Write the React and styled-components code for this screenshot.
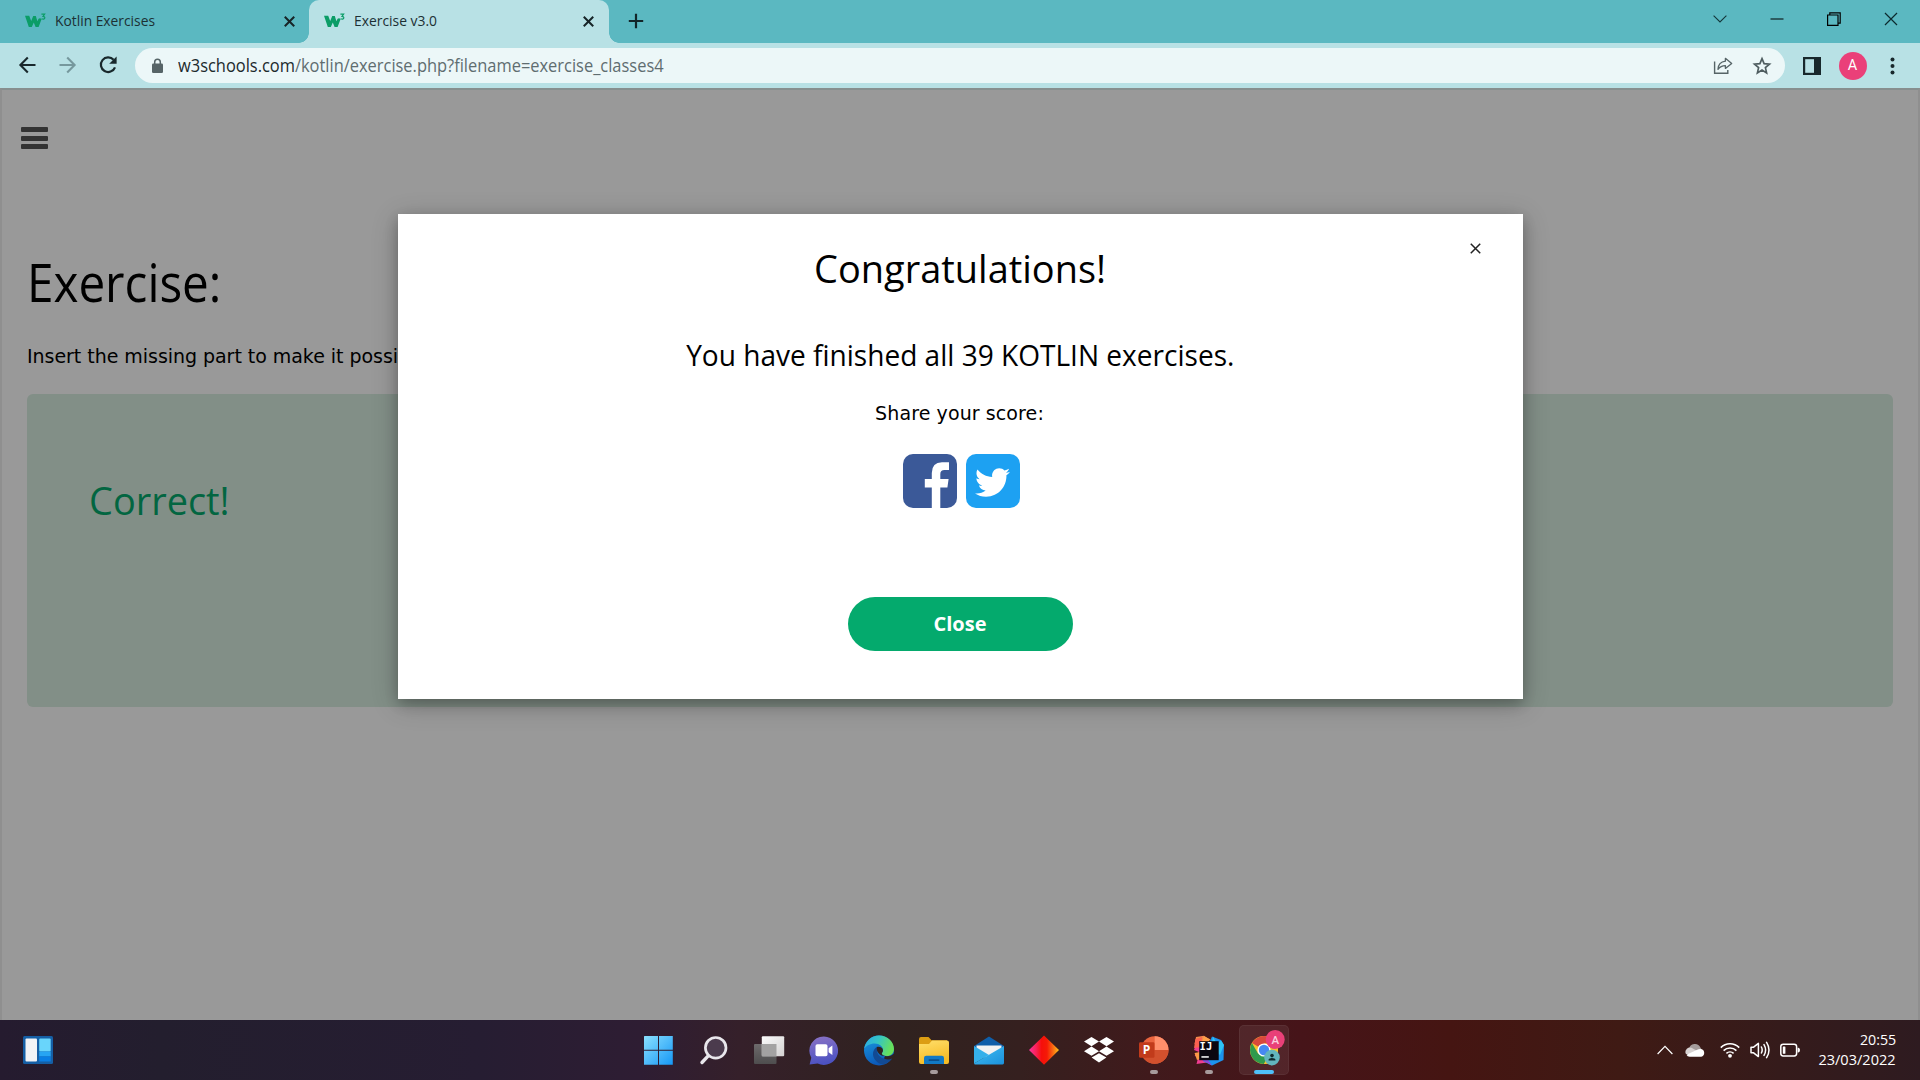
import React from "react";
import styled, { createGlobalStyle } from "styled-components";
import { FaTwitter } from "react-icons/fa";

const GlobalStyle = createGlobalStyle`
  * { box-sizing: border-box; }
  body { margin: 0; overflow: hidden; font-family: "Open Sans", "Noto Sans", sans-serif; }
  h1, h2, h3, p { margin: 0; font-weight: 400; }
  button { border: 0; background: none; padding: 0; font: inherit; }
  svg { display: block; flex: none; }
`;

const Screen = styled.div`
  width: 1920px;
  height: 1080px;
  display: flex;
  flex-direction: column;
  overflow: hidden;
`;

const Condensed = styled.span`
  display: inline-block;
  white-space: nowrap;
  transform: scaleX(${(p) => p.$x});
  transform-origin: ${(p) => p.$origin || "left"} center;
`;

/* ---------- browser chrome ---------- */

const TabStrip = styled.header`
  height: 43px;
  flex: none;
  display: flex;
  background: #5bb8c1;
`;

const Tab = styled.div`
  position: relative;
  display: flex;
  align-items: center;
  width: ${(p) => p.$width}px;
  padding: 0 ${(p) => p.$right}px 1px ${(p) => p.$left}px;
  border-radius: 10px 10px 0 0;
  background: ${(p) => (p.$active ? "#b8e1e5" : "transparent")};
  color: #1c3034;
  font-size: 15px;

  &::before, &::after {
    content: "";
    display: ${(p) => (p.$active ? "block" : "none")};
    position: absolute;
    bottom: 0;
    width: 10px;
    height: 10px;
  }
  &::before {
    left: -10px;
    background: radial-gradient(circle at 0 0, transparent 9.5px, #b8e1e5 10px);
  }
  &::after {
    right: -10px;
    background: radial-gradient(circle at 100% 0, transparent 9.5px, #b8e1e5 10px);
  }
`;

const TabTitle = styled.span`
  flex: 1;
  margin-left: 9px;
  line-height: 20px;
  padding-bottom: 3px;
`;

const NewTab = styled.button`
  display: flex;
  align-items: center;
  margin-left: 19px;
  padding-bottom: 1px;
`;

const WindowControls = styled.div`
  display: flex;
  align-items: center;
  gap: 43px;
  margin-left: auto;
  padding: 0 22px 6px 0;
`;

const Toolbar = styled.nav`
  height: 45px;
  flex: none;
  display: flex;
  align-items: center;
  background: #b8e1e5;
  padding: 0 18px 0 17px;
`;

const NavButtons = styled.div`
  display: flex;
  align-items: center;
  gap: 20.5px;
  width: 118px;
  padding-bottom: 1px;
`;

const AddressBar = styled.div`
  flex: 1;
  height: 35px;
  display: flex;
  align-items: center;
  padding: 0 13px 0 16px;
  border-radius: 18px;
  background: #ecf7f8;
  color: #5f6d70;
  font-size: 17.5px;
`;

const Url = styled.span`
  flex: 1;
  margin-left: 14px;
  line-height: 35px;
  b { font-weight: 400; color: #1c2a2d; }
`;

const AddressActions = styled.div`
  display: flex;
  align-items: center;
  gap: 19px;
`;

const ToolbarActions = styled.div`
  flex: none;
  display: flex;
  align-items: center;
  gap: 17.5px;
  margin-left: 18px;
  width: 99px;
`;

const Avatar = styled.span`
  flex: none;
  width: 28px;
  height: 28px;
  border-radius: 50%;
  background: #ea4079;
  color: #fff;
  font: 14.5px/28px Roboto, sans-serif;
  text-align: center;
`;

/* ---------- web page ---------- */

const Page = styled.main`
  position: relative;
  flex: 1;
  padding: 37px 25px 0;
  border: 2px solid #efefef;
  border-top-color: #e2efef;
  border-bottom: 0;
  background: #fff;
`;

const MenuButton = styled.button`
  display: flex;
  flex-direction: column;
  justify-content: space-between;
  height: 22px;
  margin-left: -6px;
`;

const MenuBar = styled.span`
  width: 27px;
  height: 5px;
  border-radius: 1px;
  background: #555;
`;

const ExerciseTitle = styled.h1`
  margin-top: 103px;
  font-size: 52.5px;
  line-height: 60px;
  color: #000;
`;

const Instruction = styled.p`
  margin-top: 30px;
  font: 19px/28px "DejaVu Sans", sans-serif;
  letter-spacing: -0.04px;
`;

const ResultPanel = styled.section`
  height: 313px;
  margin-top: 24px;
  padding: 81px 62px;
  border-radius: 6px;
  background: #d9eee1;
  color: #04aa6d;
`;

const ResultText = styled.h2`
  font-size: 39px;
  line-height: 50px;
`;

const Overlay = styled.div`
  position: absolute;
  inset: -2px -2px 0;
  display: flex;
  justify-content: center;
  align-items: flex-start;
  padding-top: 126px;
  padding-left: 1px;
  background: rgba(0, 0, 0, 0.4);
`;

const Modal = styled.div`
  position: relative;
  width: 1125px;
  height: 485px;
  display: flex;
  flex-direction: column;
  align-items: center;
  padding-top: 29px;
  background: #fff;
  color: #000;
  box-shadow: 0 5px 12px rgba(0, 0, 0, 0.2), 0 5px 25px rgba(0, 0, 0, 0.24);
`;

const DismissButton = styled.button`
  position: absolute;
  top: 29px;
  right: 42px;
`;

const ModalTitle = styled.h2`
  font-size: 39px;
  line-height: 50px;
`;

const ModalMessage = styled.h3`
  margin-top: 42px;
  font-size: 29.5px;
  line-height: 40px;
`;

const ShareLabel = styled.p`
  margin: 24px 2px 0 0;
  font: 19px/28px "DejaVu Sans", sans-serif;
  letter-spacing: 0.1px;
`;

const ShareLinks = styled.div`
  display: flex;
  gap: 8.5px;
  margin: 27.4px 0 0 2px;
`;

const TwitterTile = styled.span`
  width: 54px;
  height: 54px;
  display: flex;
  align-items: center;
  justify-content: center;
  padding-top: 2px;
  border-radius: 10px;
  background: #1da1f2;
  color: #fff;
`;

const CloseButton = styled.button`
  width: 225px;
  height: 54px;
  margin-top: 88.6px;
  padding: 0 1px 1px 0;
  border-radius: 27px;
  background: #04aa6d;
  color: #fff;
  font-size: 20px;
  font-weight: 700;
`;

/* ---------- taskbar ---------- */

const Taskbar = styled.footer`
  height: 60px;
  flex: none;
  display: grid;
  grid-template-columns: 631px 1fr auto;
  align-items: center;
  color: #fff;
  background: linear-gradient(90deg, #251b2f 0, #231e2e 160px, #261d32 480px, #2e1d33 640px, #35202a 740px,
    #30221f 900px, #35201f 1020px, #401a1c 1150px, #461419 1300px, #451512 1450px, #3f1a14 1620px, #351b1b 1780px, #2e1b20 1920px);
`;

const Widgets = styled.div`
  padding: 0 0 0 23px;
`;

const Apps = styled.div`
  display: flex;
  height: 60px;
`;

const AppSlot = styled.div`
  width: 55px;
  height: 60px;
  display: flex;
  flex-direction: column;
  align-items: center;
  padding-top: 15px;
`;

const AppTile = styled.div`
  display: flex;
  flex-direction: column;
  align-items: center;
  width: 50px;
  height: 50px;
  margin-top: -10px;
  padding-top: 9px;
  border: 1px solid ${(p) => (p.$active ? "rgba(255,255,255,.05)" : "transparent")};
  border-radius: 5px;
  background: ${(p) => (p.$active ? "rgba(255,255,255,.07)" : "transparent")};
`;

const RunningMark = styled.span`
  width: ${(p) => (p.$active ? 20 : 8)}px;
  height: 4px;
  margin-top: 3px;
  border-radius: 2px;
  background: ${(p) => (p.$active ? "#4fc0f8" : "#a79b9c")};
`;

const Tray = styled.div`
  display: flex;
  align-items: center;
  padding-right: 24px;
`;

const TrayIcon = styled.span`
  margin-right: ${(p) => p.$gap}px;
`;

const Clock = styled.div`
  width: 96px;
  padding-bottom: 2px;
  font-size: 15px;
  line-height: 20px;
  text-align: right;
`;

/* ---------- drawings ---------- */

const W3Icon = () => (
  <svg width="21" height="16" viewBox="0 0 21 16">
    <path d="M0 2.8 H4.2 L6.2 8 L8.2 3 H10.8 L12.4 8.2 L13.6 5.8 Q15 4.6 16.6 6 L13.6 14 H10.6 L8.8 9.6 L6.8 14 H3.8 Z" fill="#0b9d67" />
    <path d="M16.4 1.2 H19.6 L18 3.4 Q20 3.6 19.8 5.1 Q19 6.9 16.6 5.8" fill="none" stroke="#0b9d67" strokeWidth="1.2" />
  </svg>
);

const Cross = ({ size, stroke, color = "#172427" }) => (
  <svg width={size} height={size} viewBox="0 0 10 10">
    <path d="M.7 .7 L9.3 9.3 M9.3 .7 L.7 9.3" stroke={color} strokeWidth={(stroke * 10) / size} fill="none" />
  </svg>
);

const Arrow = ({ flip, color }) => (
  <svg width="20" height="20" viewBox="0 0 20 20">
    <path transform={flip ? "translate(20 0) scale(-1 1)" : undefined} d="M18.5 10 H3.5 M10.8 2.6 L3.4 10 L10.8 17.4" fill="none" stroke={color} strokeWidth="2.1" />
  </svg>
);

const Reload = () => (
  <svg width="20" height="20" viewBox="0 0 20 20">
    <path d="M15.6 4.8 A7.3 7.3 0 1 0 17 12.3" fill="none" stroke="#18282c" strokeWidth="2.2" />
    <path d="M18.6 1.4 V8.8 H11.2 Z" fill="#18282c" />
  </svg>
);

const Lock = () => (
  <svg width="13" height="16" viewBox="0 0 13 16">
    <rect x="1" y="5.6" width="11" height="9.4" rx="1.3" fill="#566467" />
    <path d="M3.7 6 V4 a2.8 2.8 0 0 1 5.6 0 V6" fill="none" stroke="#566467" strokeWidth="1.5" />
  </svg>
);

const ShareIcon = () => (
  <svg width="20" height="18" viewBox="0 0 20 18">
    <path d="M1.6 4.5 V16.2 H14.8 V13" fill="none" stroke="#566467" strokeWidth="1.4" />
    <path d="M12.4 1.3 L18.7 6.4 L12.4 11.4 V8.6 Q7.6 8.6 5 12.4 Q5.3 5 12.4 4.2 Z" fill="none" stroke="#566467" strokeWidth="1.3" strokeLinejoin="round" />
  </svg>
);

const Star = () => (
  <svg width="20" height="20" viewBox="0 0 20 20">
    <path d="M10 2.6 L12.1 7.6 L17.5 8.1 L13.4 11.6 L14.6 16.9 L10 14.1 L5.4 16.9 L6.6 11.6 L2.5 8.1 L7.9 7.6 Z" fill="none" stroke="#4f5d60" strokeWidth="1.7" />
  </svg>
);

const SidePanel = () => (
  <svg width="18" height="18" viewBox="0 0 18 18">
    <rect x="1.1" y="1.1" width="15.8" height="15.8" fill="none" stroke="#18282c" strokeWidth="2.2" />
    <rect x="11" y="1" width="6" height="16" fill="#18282c" />
  </svg>
);

const Dots = () => (
  <svg width="18" height="18" viewBox="0 0 18 18" fill="#18282c">
    <circle cx="8.5" cy="2.5" r="2" /><circle cx="8.5" cy="9" r="2" /><circle cx="8.5" cy="15.4" r="2" />
  </svg>
);

const Facebook = () => (
  <svg width="54" height="54" viewBox="0 0 54 54">
    <rect width="54" height="54" rx="10" fill="#3b5998" />
    <path d="M28.8 54 V33.5 H21.8 V25 H28.8 V19 Q28.8 8.4 39 8.2 H46 V16 H41.5 Q37.3 16 37.3 20 V25 H45.6 L44.4 33.5 H37.3 V54 Z" fill="#fff" />
  </svg>
);

const Gradient = ({ id, from, mid, to, x2 = 1, y2 = 1 }) => (
  <linearGradient id={id} x1="0" y1="0" x2={x2} y2={y2}>
    <stop offset="0" stopColor={from} />
    {mid && <stop offset=".5" stopColor={mid} />}
    <stop offset="1" stopColor={to} />
  </linearGradient>
);

const AppSvg = ({ children }) => <svg width="32" height="32" viewBox="0 0 32 32">{children}</svg>;

const WidgetsIcon = () => (
  <svg width="30" height="28" viewBox="0 0 30 28">
    <rect width="30" height="28" rx="1.5" fill="#155fa5" />
    <rect x="2.5" y="2.5" width="11.5" height="23" rx="1" fill="#f1f3f6" />
    <rect x="16.2" y="2.5" width="11.5" height="13" rx="1" fill="#69d5fb" />
    <rect x="16.2" y="15.5" width="11.5" height="5" fill="#27a5f3" />
    <rect x="16.2" y="20.5" width="11.5" height="5" fill="#0a7fe4" />
  </svg>
);

const StartIcon = () => (
  <AppSvg>
    <defs><Gradient id="win" from="#8be0ff" to="#1597f5" /></defs>
    <path d="M1.5 1 H15 V14.8 H1 V1.5 Z M16 1 H29.8 V14.8 H16 Z M1 15.8 H15 V29.8 H1 Z M16 15.8 H29.8 V29.8 H16 Z" fill="url(#win)" />
  </AppSvg>
);

const SearchIcon = () => (
  <AppSvg>
    <circle cx="17.7" cy="12.8" r="10.3" fill="#4b3b4d" stroke="#e9e7ec" strokeWidth="2.7" />
    <path d="M10.2 20.8 L4 27.5" stroke="#e9e7ec" strokeWidth="3.4" strokeLinecap="round" />
  </AppSvg>
);

const TaskViewIcon = () => (
  <AppSvg>
    <defs>
      <Gradient id="tvBack" from="#6d6a6b" to="#4e4d4e" x2={0} />
      <Gradient id="tvFront" from="#fbfbfb" to="#d3d1d1" />
    </defs>
    <rect x="1" y="9" width="22.5" height="20" rx="1" fill="url(#tvBack)" />
    <rect x="8.8" y="1.3" width="22.4" height="20" rx="1" fill="url(#tvFront)" />
    <rect x="8.8" y="9" width="14.7" height="12.3" fill="#a3a2a2" />
  </AppSvg>
);

const ChatIcon = () => (
  <AppSvg>
    <defs><Gradient id="chat" from="#8b73c5" to="#4c52c2" x2={0.2} /></defs>
    <path d="M16 1.4 A14.3 14.3 0 1 1 9.6 28.6 L1.6 29.4 L3.3 22.7 A14.3 14.3 0 0 1 16 1.4 Z" fill="url(#chat)" />
    <rect x="7.5" y="9.3" width="12" height="12" rx="1.8" fill="#fff" />
    <path d="M20.6 13.3 L24.4 10.6 V20 L20.6 17.3 Z" fill="#fff" />
  </AppSvg>
);

const EdgeIcon = () => (
  <AppSvg>
    <defs>
      <Gradient id="edgeTop" from="#2ba7e8" mid="#35c5c4" to="#67e05b" y2={0.3} />
      <Gradient id="edgeLeft" from="#1b9de2" to="#0b57b8" x2={0.4} />
    </defs>
    <circle cx="16" cy="15.5" r="15" fill="url(#edgeLeft)" />
    <path d="M1.2 13.6 C2.5 5.5 9 .5 16 .5 C25 .5 31 7 31 14 C31 18.5 27.6 21 24 21 C20.8 21 18.8 19.8 18.8 18.6 C18.8 17.6 20 17 20 15 C20 11.4 16.4 8.4 11.8 8.4 C6.8 8.4 3.2 10.8 1.2 13.6 Z" fill="url(#edgeTop)" />
    <path d="M14 11.8 C9.4 14.8 8.8 20.6 12.2 25 C15.4 29.2 20.6 30.4 24.2 28 C27 26.4 28.8 24.2 29.2 23 C26 25 20.6 25 17 21.6 C14.2 19 13.2 15.6 15.2 12.8 Z" fill="#124a94" />
    <path d="M14 12 C16.6 11.2 20 12.6 20 15.4 C20 17 18.8 17.6 18.8 18.6 C18.8 19.8 20 20.7 22 21 C17 21.6 12.8 16.4 14 12 Z" fill="#30221f" />
    <path d="M22 21 Q27 22 30.6 19 L33 20 L29.2 23.6 C26 25 23.5 24.6 21 23.6 Z" fill="#30221f" />
  </AppSvg>
);

const ExplorerIcon = () => (
  <AppSvg>
    <defs><Gradient id="folder" from="#ffdf6b" to="#f6bb25" x2={0.3} /></defs>
    <path d="M1 4 Q1 2 3 2 H10.5 L13.5 5.2 H29 V12 H1 Z" fill="#dc9d13" />
    <path d="M1 9 H11 L14 5.5 H29 Q31 5.5 31 7.5 V27 Q31 29 29 29 H3 Q1 29 1 27 Z" fill="url(#folder)" />
    <path d="M6 29 V23 Q6 20.8 8.2 20.8 H23.8 Q26 20.8 26 23 V29 Z" fill="#1279c4" />
    <rect x="10.5" y="24.2" width="11" height="1.8" rx=".9" fill="#0a4f8c" />
  </AppSvg>
);

const MailIcon = () => (
  <AppSvg>
    <defs><Gradient id="mail" from="#42bff2" to="#1b91dc" /></defs>
    <path d="M1 11 L16 1.5 L31 11 V18 H1 Z" fill="#0f5ea9" />
    <path d="M3.5 10.6 H28.5 V18 L16 25 L3.5 18 Z" fill="#f2f2f2" />
    <path d="M31 11 V28 Q31 29.4 29.6 29.4 H2.4 Q1 29.4 1 28.4 Z" fill="url(#mail)" />
    <path d="M1 11 L16 20 L1 28.4 Z" fill="#35b0ea" />
  </AppSvg>
);

const DiamondIcon = () => (
  <AppSvg>
    <defs>
      <linearGradient id="diamond">
        <stop offset="0" stopColor="#f637a2" /><stop offset=".25" stopColor="#f81f52" />
        <stop offset=".42" stopColor="#f50f0b" /><stop offset=".6" stopColor="#f51a06" />
        <stop offset=".8" stopColor="#f96a12" /><stop offset="1" stopColor="#ffc51c" />
      </linearGradient>
    </defs>
    <path d="M16 .4 L31 15 L16 29.8 L1 15 Z" fill="url(#diamond)" />
  </AppSvg>
);

const DropboxIcon = () => (
  <AppSvg>
    <path fill="#fff" d="M8.5 2 L16 6.6 L8.5 11.2 L1 6.6 Z M23.5 2 L31 6.6 L23.5 11.2 L16 6.6 Z M8.5 11.6 L16 16.2 L8.5 20.8 L1 16.2 Z M23.5 11.6 L31 16.2 L23.5 20.8 L16 16.2 Z M16 18.2 L23.4 22.6 L16 27.6 L8.6 22.6 Z" />
  </AppSvg>
);

const GlyphText = styled.text`
  font: ${(p) => p.$weight || 700} ${(p) => p.$size}px ${(p) => p.$family || '"Open Sans"'}, sans-serif;
  fill: ${(p) => p.$fill || "#fff"};
  text-anchor: middle;
`;

const PowerPointIcon = () => (
  <AppSvg>
    <circle cx="16.7" cy="15" r="13.8" fill="#e9643e" />
    <path d="M16.7 1.2 A13.8 13.8 0 0 1 30.5 15 H16.7 Z" fill="#ff8f6b" />
    <path d="M2.9 15 H30.5 A13.8 13.8 0 0 1 2.9 15 Z" fill="#d2502d" />
    <rect x="1" y="7.3" width="15.5" height="15.5" rx="1.4" fill="#c13b1b" />
    <GlyphText x="8.6" y="19.4" $size={12}>P</GlyphText>
  </AppSvg>
);

const IntelliJIcon = () => (
  <AppSvg>
    <path d="M3 2 L11 .8 L16 4 V16 L1.5 9 Z" fill="#f58a4c" />
    <path d="M3.5 7.5 L1 15 L6 17 L1.6 20.5 L5 23 L3.5 29 L14 27.5 L14 8 Z" fill="#ef3d91" />
    <path d="M2.5 4 L9 2 L8 12 L1 13 Z" fill="#fb6150" />
    <path d="M1.5 18 L7 17 L7 24 L4 25 Z" fill="#fb9a45" />
    <path d="M19 1.5 L28 5 L31 10 L30.5 25 L19 30.6 L10 26 L17 6 Z" fill="#1c93ee" />
    <path d="M20 1.5 L24 9 L28 5.4 L31 10 L27 20 L18 12 Z" fill="#2fc3f5" />
    <path d="M11 1.2 L17.5 4.5 L14 8 L9 7 Z" fill="#ffa24a" />
    <path d="M9 25 L19 30.6 L15 25 Z" fill="#8a47d8" />
    <rect x="6.2" y="6.2" width="19.5" height="19" fill="#0b0710" />
    <GlyphText x="12.9" y="15.4" $size={10.5} $family={'"DejaVu Sans Mono"'}>IJ</GlyphText>
    <rect x="8.4" y="21.2" width="7.4" height="1.5" fill="#fff" />
  </AppSvg>
);

const ChromeIcon = () => (
  <svg width="50" height="36" viewBox="0 0 50 36">
    <circle cx="25" cy="20" r="14" fill="#f6c22d" />
    <path d="M25 20 L12.9 13 A14 14 0 0 1 37.1 13 Z" fill="#d8493c" />
    <path d="M12.9 13 A14 14 0 0 0 25 34 L31 23.5 L19 23.5 Z" fill="#2f9a4c" />
    <path d="M25 13.2 H37.2 A14 14 0 0 1 25 34 L31 23 Z" fill="#f6c22d" />
    <circle cx="25" cy="20" r="6.6" fill="#fff" />
    <circle cx="25" cy="20" r="5.2" fill="#4688f1" />
    <circle cx="36.2" cy="9.5" r="9.5" fill="#e94078" />
    <GlyphText x="36.2" y="13.7" $size={11.5} $weight={500} $family="Roboto" $fill="#f9cfde">A</GlyphText>
    <circle cx="33" cy="27.6" r="7.8" fill="#62b5bd" />
    <circle cx="33" cy="25.6" r="1.8" fill="#0e2a2e" />
    <path d="M29.6 30.6 V29.6 Q29.8 28 33 28 Q36.2 28 36.4 29.6 V30.6 Z" fill="#0e2a2e" />
  </svg>
);

const ChromeSlot = styled.div`
  margin-top: -5px;
  height: 37px;
`;

const apps = [
  { name: "start", Icon: StartIcon },
  { name: "search", Icon: SearchIcon },
  { name: "tasks", Icon: TaskViewIcon },
  { name: "chat", Icon: ChatIcon },
  { name: "edge", Icon: EdgeIcon },
  { name: "explorer", Icon: ExplorerIcon, running: true },
  { name: "mail", Icon: MailIcon },
  { name: "diamond", Icon: DiamondIcon },
  { name: "dropbox", Icon: DropboxIcon },
  { name: "powerpoint", Icon: PowerPointIcon, running: true },
  { name: "intellij", Icon: IntelliJIcon, running: true },
  { name: "chrome", Icon: ChromeIcon, running: true, active: true },
];

const TaskbarApp = ({ app: { Icon, running, active } }) => (
  <AppSlot>
    <AppTile $active={active}>
      {active ? <ChromeSlot><Icon /></ChromeSlot> : <Icon />}
      {running && <RunningMark $active={active} />}
    </AppTile>
  </AppSlot>
);

export default function App() {
  return (
    <Screen>
      <GlobalStyle />
      <TabStrip>
        <Tab $width={309} $left={25} $right={14}>
          <W3Icon />
          <TabTitle><Condensed $x={0.92}>Kotlin Exercises</Condensed></TabTitle>
          <Cross size={11} stroke={2} />
        </Tab>
        <Tab $active $width={300} $left={15} $right={15}>
          <W3Icon />
          <TabTitle><Condensed $x={0.925}>Exercise v3.0</Condensed></TabTitle>
          <Cross size={11} stroke={2} />
        </Tab>
        <NewTab>
          <svg width="16" height="16" viewBox="0 0 16 16"><path d="M8 .8 V15.2 M.8 8 H15.2" stroke="#12262a" strokeWidth="2.2" /></svg>
        </NewTab>
        <WindowControls>
          <svg width="14" height="14" viewBox="0 0 14 14"><path d="M.6 3.6 L7 10 L13.4 3.6" fill="none" stroke="#14363a" strokeWidth="1.1" /></svg>
          <svg width="14" height="14" viewBox="0 0 14 14"><path d="M.5 7 H13.5" stroke="#000" strokeWidth="1" /></svg>
          <svg width="14" height="14" viewBox="0 0 14 14"><path d="M.6 3 H11 V13.4 H.6 Z M2.8 3 V.8 H13.2 V11.2 H11" fill="none" stroke="#000" strokeWidth="1.2" /></svg>
          <Cross size={14} stroke={1.2} color="#0c2a2e" />
        </WindowControls>
      </TabStrip>

      <Toolbar>
        <NavButtons>
          <Arrow color="#18282c" />
          <Arrow flip color="#76989d" />
          <Reload />
        </NavButtons>
        <AddressBar>
          <Lock />
          <Url><Condensed $x={0.939}><b>w3schools.com</b>/kotlin/exercise.php?filename=exercise_classes4</Condensed></Url>
          <AddressActions><ShareIcon /><Star /></AddressActions>
        </AddressBar>
        <ToolbarActions>
          <SidePanel />
          <Avatar>A</Avatar>
          <Dots />
        </ToolbarActions>
      </Toolbar>

      <Page>
        <MenuButton aria-label="Menu"><MenuBar /><MenuBar /><MenuBar /></MenuButton>
        <ExerciseTitle><Condensed $x={0.907}>Exercise:</Condensed></ExerciseTitle>
        <Instruction>Insert the missing part to make it possible</Instruction>
        <ResultPanel>
          <ResultText><Condensed $x={0.972}>Correct!</Condensed></ResultText>
        </ResultPanel>

        <Overlay>
          <Modal role="dialog">
            <DismissButton aria-label="Dismiss"><Cross size={11} stroke={1.5} color="#222" /></DismissButton>
            <ModalTitle><Condensed $x={0.973} $origin="center">Congratulations!</Condensed></ModalTitle>
            <ModalMessage><Condensed $x={0.951} $origin="center">You have finished all 39 KOTLIN exercises.</Condensed></ModalMessage>
            <ShareLabel>Share your score:</ShareLabel>
            <ShareLinks>
              <Facebook />
              <TwitterTile><FaTwitter size={35} /></TwitterTile>
            </ShareLinks>
            <CloseButton>Close</CloseButton>
          </Modal>
        </Overlay>
      </Page>

      <Taskbar>
        <Widgets><WidgetsIcon /></Widgets>
        <Apps>{apps.map((app) => <TaskbarApp key={app.name} app={app} />)}</Apps>
        <Tray>
          <TrayIcon $gap={12}>
            <svg width="16" height="16" viewBox="0 0 16 16"><path d="M.6 12 L8 4.4 L15.4 12" fill="none" stroke="#fff" strokeWidth="1.2" /></svg>
          </TrayIcon>
          <TrayIcon $gap={15}>
            <svg width="20" height="16" viewBox="0 0 20 16">
              <path d="M4 7 A6 6 0 0 1 15.4 5.6 L17 8 L10 12 Z" fill="#a49c9b" />
              <path d="M.5 11 A4.5 4.5 0 0 1 6.4 5.8 L18 12 H1 Z" fill="#d8d3d2" />
              <path d="M1.4 12.8 L12.2 7.8 Q14 6.6 16 7 A4 4 0 0 1 16.2 14.8 H4.6 Q2.4 14.8 1.4 12.8 Z" fill="#fff" />
            </svg>
          </TrayIcon>
          <TrayIcon $gap={10}>
            <svg width="20" height="18" viewBox="0 0 20 18" fill="none" stroke="#fff" strokeWidth="1.6">
              <path d="M.8 6.6 A13 13 0 0 1 19.2 6.6 M3.6 9.6 A9.2 9.2 0 0 1 16.4 9.6 M6.4 12.4 A5.2 5.2 0 0 1 13.6 12.4" />
              <circle cx="10" cy="14.8" r="1.9" fill="#fff" stroke="none" />
            </svg>
          </TrayIcon>
          <TrayIcon $gap={10}>
            <svg width="20" height="18" viewBox="0 0 20 18" fill="none" stroke="#fff" strokeWidth="1.5" strokeLinejoin="round" strokeLinecap="round">
              <path d="M1 6.2 H3.6 L8.4 2.4 V15.6 L3.6 11.8 H1 Z M11.4 6 Q13 9 11.4 12 M14 3.6 Q17.2 9 14 14.4 M16.6 1.4 Q21.4 9 16.6 16.6" />
            </svg>
          </TrayIcon>
          <TrayIcon $gap={0}>
            <svg width="20" height="16" viewBox="0 0 20 16">
              <rect x=".8" y="2.2" width="15.8" height="11.8" rx="2.4" fill="none" stroke="#fff" strokeWidth="1.5" />
              <rect x="2.8" y="4.4" width="2.6" height="7.4" rx=".6" fill="#fff" />
              <path d="M17.6 5.8 H18.4 Q20 6 20 8.1 Q20 10.2 18.4 10.4 H17.6 Z" fill="#fff" />
            </svg>
          </TrayIcon>
          <Clock>
            <div><Condensed $x={0.95} $origin="right">20:55</Condensed></div>
            <div><Condensed $x={0.97} $origin="right">23/03/2022</Condensed></div>
          </Clock>
        </Tray>
      </Taskbar>
    </Screen>
  );
}
